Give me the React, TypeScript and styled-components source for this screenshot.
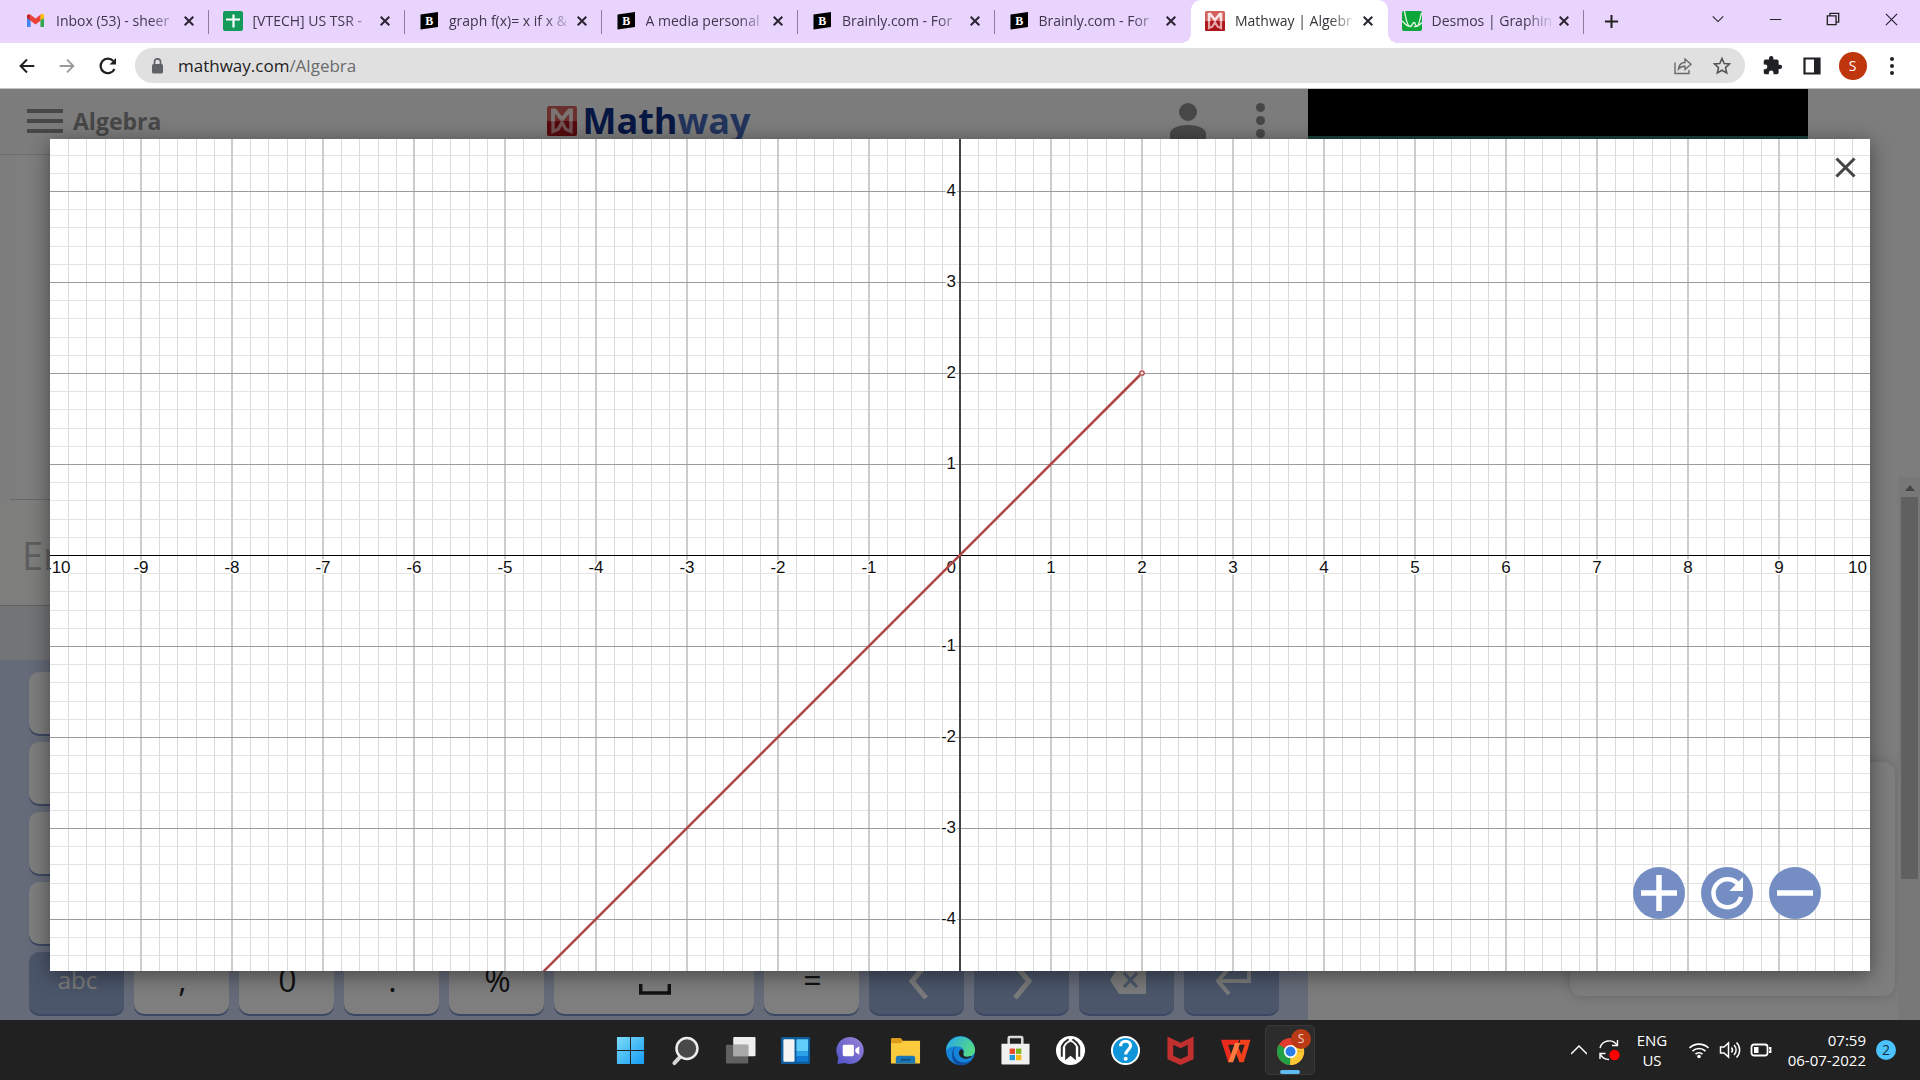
import React from "react";
import styled, { createGlobalStyle, css } from "styled-components";

const ui = `"Open Sans", "Noto Sans", sans-serif`;

const GlobalStyle = createGlobalStyle`
  * { box-sizing: border-box; }
  body { margin: 0; font-family: ${ui}; overflow: hidden; }
  button { font: inherit; color: inherit; background: none; border: 0; padding: 0; }
  svg { display: block; }
`;

const Screen = styled.div`
  height: 100vh;
  display: flex;
  flex-direction: column;
`;

/* ---------- Browser chrome ---------- */

const TabStrip = styled.div`
  height: 43px;
  flex: none;
  display: flex;
  align-items: stretch;
  background: #e8d4fd;
  padding-left: 12px;
`;

const TabList = styled.div`
  flex: 0 1 1572px;
  min-width: 0;
  display: grid;
  grid-template-columns: repeat(8, minmax(0, 1fr));
`;

const TabItem = styled.div<{ $active?: boolean; $divider?: boolean }>`
  position: relative;
  display: flex;
  align-items: center;
  gap: 10px;
  padding: 0 12px 1px 14px;
  color: ${(p) => (p.$active ? "#35353a" : "#41364c")};
  ${(p) =>
    p.$divider &&
    css`
      &::after {
        content: "";
        position: absolute;
        right: 0;
        top: 10px;
        height: 24px;
        width: 1px;
        background: #8d7f9b;
      }
    `}
  ${(p) =>
    p.$active &&
    css`
      background: #fff;
      border-radius: 10px 10px 0 0;
      &::before,
      &::after {
        content: "";
        position: absolute;
        bottom: 0;
        width: 10px;
        height: 10px;
      }
      &::before {
        left: -10px;
        background: radial-gradient(circle at 0 0, transparent 10px, #fff 10px);
      }
      &::after {
        right: -10px;
        background: radial-gradient(circle at 100% 0, transparent 10px, #fff 10px);
      }
    `}
`;

const TabTitle = styled.span`
  flex: 1;
  min-width: 0;
  overflow: hidden;
  white-space: nowrap;
  font-size: 14px;
  line-height: 20px;
  mask-image: linear-gradient(to right, #000 78%, rgba(0, 0, 0, 0.1) 100%);
`;

const IconButton = styled.button<{ $w?: number }>`
  flex: none;
  display: flex;
  align-items: center;
  justify-content: center;
  width: ${(p) => p.$w ?? 20}px;
`;

const TabIcon = styled.span`
  width: 20px;
  flex: none;
`;

const TabClose = styled(IconButton)`
  width: 16px;
  margin-left: -6px;
`;

const NewTab = styled(IconButton)`
  margin-left: 8px;
  width: 38px;
`;

const WindowControls = styled.div`
  margin-left: auto;
  display: flex;
  padding-bottom: 5px;
`;

const Toolbar = styled.div`
  height: 46px;
  flex: none;
  display: flex;
  align-items: center;
  background: #fff;
  border-bottom: 1px solid #c4c4c4;
  padding: 0 9px 0 7px;
`;

const AddressBar = styled.div`
  flex: 1;
  height: 35px;
  margin: 0 7px;
  padding: 0 3px 0 14px;
  display: flex;
  align-items: center;
  gap: 12px;
  border-radius: 18px;
  background: #e0e0e0;
`;

const Address = styled.a`
  flex: 1;
  font-size: 17px;
  line-height: 24px;
  color: #6b6b6b;
  text-decoration: none;
  b { font-weight: 400; color: #222; }
`;

const AddressActions = styled.div`
  display: flex;
`;

const Avatar = styled.span`
  width: 28px;
  height: 28px;
  border-radius: 50%;
  background: #bf360c;
  color: #fff;
  font-size: 14px;
  line-height: 28px;
  text-align: center;
`;

/* ---------- Web page behind the dialog ---------- */

const Viewport = styled.main`
  position: relative;
  flex: 1;
  min-height: 0;
  overflow: hidden;
  background: #fafafa;
`;

const Page = styled.div`
  height: 100%;
  display: flex;
`;

const Solver = styled.section`
  flex: 0 1 1308px;
  display: flex;
  flex-direction: column;
`;

const Header = styled.header`
  height: 66px;
  flex: none;
  display: grid;
  grid-template-columns: 1fr auto 1fr;
  align-items: center;
  padding: 0 43px 2px 27px;
  background: #f8f8f8;
  border-bottom: 1px solid #d8d8d8;
`;

const Subject = styled.button`
  display: flex;
  align-items: center;
  gap: 10px;
  font-size: 23px;
  line-height: 28px;
  font-weight: 700;
  color: #8f8f8f;
`;

const Logo = styled.a`
  display: flex;
  align-items: center;
  gap: 5px;
  padding-left: 6px;
  font-size: 36px;
  line-height: 40px;
  font-weight: 700;
  color: #0e2f86;
  text-decoration: none;
  em { font-style: normal; color: #4668b8; }
`;

const HeaderActions = styled.div`
  justify-self: end;
  display: flex;
  align-items: center;
  gap: 50px;
`;

const History = styled.div`
  flex: 1;
  margin-left: 10px;
  background: #fdfdfd;
  border-bottom: 1px solid #d0d0d0;
`;

const Entry = styled.input`
  height: 106px;
  flex: none;
  border: 0;
  border-bottom: 1px solid #c4c4c4;
  background: #fdfcfa;
  padding: 4px 0 0 22px;
  font-family: ${ui};
  font-size: 38px;
  &::placeholder { color: #bcbcbc; opacity: 1; }
`;

const Suggestions = styled.div`
  height: 54px;
  flex: none;
  background: #e6e8ed;
`;

const Keyboard = styled.div`
  flex: none;
  display: grid;
  grid-template-columns: repeat(12, 1fr);
  grid-auto-rows: 62px;
  gap: 8px 10px;
  padding: 12px 29px 6px;
  background: #cad6f0;
`;

const Key = styled.button<{ $blue?: boolean; $wide?: boolean }>`
  grid-column: span ${(p) => (p.$wide ? 2 : 1)};
  display: flex;
  align-items: center;
  justify-content: center;
  border-radius: 10px;
  padding: 0 0 6px 2px;
  font-size: ${(p) => (p.$blue ? 24 : 32)}px;
  line-height: 36px;
  color: ${(p) => (p.$blue ? "#fafafa" : "#222")};
  background: ${(p) => (p.$blue ? "#96acd4" : "#fdfdfd")};
  box-shadow: 0 2px 0 #788ec6;
`;

const Sidebar = styled.aside`
  flex: 1;
  display: flex;
  flex-direction: column;
  justify-content: space-between;
`;

const AdBanner = styled.div`
  height: 56px;
  width: 500px;
  background: #000;
  border-bottom: 9px solid #358370;
`;

const HelpRow = styled.div`
  display: flex;
  align-items: flex-end;
  justify-content: flex-end;
  gap: 3px;
`;

const HelpCard = styled.div`
  width: 325px;
  height: 234px;
  margin-bottom: 24px;
  border-radius: 12px;
  background: #fdfdfd;
  box-shadow: 0 0 14px rgba(0, 0, 0, 0.18);
`;

const ScrollTrack = styled.div`
  width: 22px;
  height: 543px;
  padding: 8px 2px 0 3px;
  background: #f0f0f0;
  display: flex;
  flex-direction: column;
  gap: 6px;
  align-items: center;
`;

const ScrollThumb = styled.div`
  width: 17px;
  height: 382px;
  background: #c1c1c1;
`;

/* ---------- Graph dialog ---------- */

const Overlay = styled.div`
  position: absolute;
  inset: 0;
  padding: 50px 50px 49px;
  background: rgba(0, 0, 0, 0.5);
`;

const Dialog = styled.section`
  position: relative;
  width: 100%;
  height: 100%;
  background: #fff;
  box-shadow: 0 4px 20px rgba(0, 0, 0, 0.45);
`;

const GraphSvg = styled.svg`
  width: 100%;
  height: 100%;
  text {
    font-family: "Liberation Sans", Arial, sans-serif;
    font-size: 17px;
    fill: #111;
    stroke: #fff;
    stroke-width: 3px;
    paint-order: stroke;
  }
`;

const CloseGraph = styled(IconButton)`
  position: absolute;
  top: 14px;
  right: 11px;
  width: 28px;
  height: 28px;
`;

const ZoomControls = styled.div`
  position: absolute;
  right: 49px;
  bottom: 52px;
  display: flex;
  gap: 16px;
`;

const ZoomButton = styled.button`
  width: 52px;
  height: 52px;
  border-radius: 50%;
  background: #748ec4;
`;

/* ---------- Taskbar ---------- */

const Taskbar = styled.footer`
  height: 60px;
  flex: none;
  display: grid;
  grid-template-columns: 1fr auto 1fr;
  align-items: center;
  background: #212121;
  color: #fff;
`;

const Apps = styled.nav`
  grid-column: 2;
  display: flex;
  gap: 5px;
`;

const AppButton = styled.button<{ $active?: boolean }>`
  position: relative;
  width: 50px;
  height: 50px;
  border-radius: 5px;
  display: flex;
  align-items: center;
  justify-content: center;
  ${(p) =>
    p.$active &&
    css`
      background: #2c2c2c;
      box-shadow: inset 0 0 0 1px #383838;
      &::after {
        content: "";
        position: absolute;
        bottom: 1px;
        left: 15px;
        width: 20px;
        height: 4px;
        border-radius: 2px;
        background: #5fbcf0;
      }
    `}
`;

const Badge = styled.span`
  position: absolute;
  top: 4px;
  right: 4px;
  width: 20px;
  height: 20px;
  border-radius: 50%;
  background: #b93a14;
  color: #f3d9d0;
  font-size: 12px;
  line-height: 20px;
`;

const Tray = styled.div`
  justify-self: end;
  display: flex;
  align-items: center;
  padding-right: 24px;
`;

const Stacked = styled.div<{ $right?: boolean; $w: number }>`
  width: ${(p) => p.$w}px;
  font-size: 15px;
  line-height: 20px;
  text-align: ${(p) => (p.$right ? "right" : "center")};
  white-space: nowrap;
`;

const Count = styled.span`
  width: 20px;
  height: 20px;
  margin-left: 10px;
  border-radius: 50%;
  background: #4cc2ff;
  color: #14303f;
  font-size: 14px;
  line-height: 20px;
  text-align: center;
`;

/* ---------- Icons ---------- */

const Cross = ({ size = 10, w = 2, color = "#2b2433" }) => (
  <svg width={size} height={size} viewBox="0 0 10 10">
    <path d="M.7.7l8.600 8.600M9.300.7L.7 9.300" stroke={color} strokeWidth={(w * 10) / size} fill="none" />
  </svg>
);

const Gmail = () => (
  <svg width="19" height="20" viewBox="0 0 19 20">
    <path d="M1 4.500V16h3.600V8.500z" fill="#4285f4" />
    <path d="M18 4.500V16h-3.600V8.500z" fill="#34a853" />
    <path d="M14.400 4.800V9.600L18 7V5c0-2-2-2.800-3.600-1.500z" fill="#fbbc04" />
    <path d="M1 5v2l3.600 2.700V3.800C3 2.500 1 3.300 1 5z" fill="#c5221f" />
    <path d="M4.600 3.800L9.500 7.600l4.900-3.800v5.900l-4.900 3.700-4.900-3.700z" fill="#ea4335" />
  </svg>
);

const Sheets = () => (
  <svg width="20" height="20" viewBox="0 0 20 20">
    <rect width="20" height="20" rx="2" fill="#149b5b" />
    <path d="M10.500 3.500v13M3 8.500h14" stroke="#fff" strokeWidth="2.200" />
  </svg>
);

const Brainly = () => (
  <svg width="20" height="20" viewBox="0 0 20 20">
    <path d="M1.500 3.500L19 1v15L1.500 18.500z" fill="#000" />
    <text x="10.200" y="14" fontFamily="Liberation Serif, serif" fontWeight="700" fontSize="12" fill="#fff" textAnchor="middle">B</text>
  </svg>
);

const MathwayMark = ({ size = 20 }) => (
  <svg width={size} height={size} viewBox="0 0 20 20">
    <rect width="20" height="20" rx="1.500" fill="#d4605c" />
    <path d="M0 10h20v8.500q0 1.500-1.500 1.500h-17Q0 20 0 18.500z" fill="#ad141c" />
    <path d="M4 10.500V3h1.200L10 9l4.800-6H16v7.500" stroke="#f8e6e6" strokeWidth="2.600" fill="none" />
    <path d="M4 10v7l3.500-1.500L10 11l2.500 4.500L16 17v-7" stroke="#e3a5a5" strokeWidth="2.200" fill="none" />
  </svg>
);

const Desmos = () => (
  <svg width="20" height="20" viewBox="0 0 20 20">
    <rect width="20" height="20" rx="2" fill="#0da63a" />
    <path d="M2.500 0C4 9 5.500 15.500 8 15.500s2.500-4 4-4 1.500 4 3 4S18 9 19.500 2M0 10c3 2 4 5.500 8 5.500M12 15.500c3 .5 5-1 8-4" stroke="#e9fbe9" strokeWidth="1.300" fill="none" />
  </svg>
);

const icons: Record<string, React.ReactNode> = {
  back: <path d="M20 12H5.500M12 5L5 12l7 7" stroke="#202124" strokeWidth="2.200" fill="none" />,
  forward: <path d="M4 12h14.500M12 5l7 7-7 7" stroke="#9b9b9b" strokeWidth="2" fill="none" />,
};

const NavIcon = ({ name }: { name: string }) => (
  <svg width="22" height="22" viewBox="0 0 24 24">{icons[name]}</svg>
);

const Reload = () => (
  <svg width="20" height="20" viewBox="0 0 20 20">
    <path d="M16.500 13A7.300 7.300 0 1 1 15.300 5" stroke="#202124" strokeWidth="2.200" fill="none" />
    <path d="M18 2v6.500h-6.500z" fill="#202124" />
  </svg>
);

const Lock = () => (
  <svg width="17" height="18" viewBox="0 0 17 18">
    <rect x="3" y="7" width="11" height="9.500" rx="1.500" fill="#5f6368" />
    <path d="M5.500 8V4.800a3 3 0 0 1 6 0V8" stroke="#5f6368" strokeWidth="1.700" fill="none" />
  </svg>
);

const Share = () => (
  <svg width="20" height="20" viewBox="0 0 20 20" fill="none" stroke="#6a6a6a" strokeWidth="1.400">
    <path d="M2 6.500v11h14v-3.500" />
    <path d="M5.500 13C6 8.500 9 6.500 12 6.500V3l6 5.200-6 5.300v-3.300c-3-.2-5 .8-6.500 2.800z" />
  </svg>
);

const Star = () => (
  <svg width="20" height="20" viewBox="0 0 20 20">
    <path d="M10 2.500l2.200 5 5.300.5-4 3.600 1.200 5.300L10 14.200l-4.700 2.700 1.200-5.300-4-3.600 5.300-.5z" fill="none" stroke="#555" strokeWidth="1.600" />
  </svg>
);

const Puzzle = () => (
  <svg width="21" height="21" viewBox="0 0 24 24">
    <path d="M20.500 11H19V7a2 2 0 0 0-2-2h-4V3.500a2.500 2.500 0 0 0-5 0V5H4a2 2 0 0 0-2 2v3.800h1.500a2.700 2.700 0 0 1 0 5.400H2V20a2 2 0 0 0 2 2h3.800v-1.500a2.700 2.700 0 0 1 5.400 0V22H17a2 2 0 0 0 2-2v-4h1.500a2.500 2.500 0 0 0 0-5z" fill="#202124" />
  </svg>
);

const SidePanel = () => (
  <svg width="18" height="18" viewBox="0 0 18 18">
    <path d="M1.500 1.500h15v15h-15z" fill="none" stroke="#202124" strokeWidth="2.200" />
    <path d="M11 1h6v16h-6z" fill="#202124" />
  </svg>
);

const Dots = ({ r, gap, color }: { r: number; gap: number; color: string }) => (
  <svg width={r * 2} height={gap * 2 + r * 2} fill={color}>
    {[0, 1, 2].map((i) => (
      <circle key={i} cx={r} cy={r + i * gap} r={r} />
    ))}
  </svg>
);

const Line = ({ d, size = 16, w = 1.2, color = "#222" }: { d: string; size?: number; w?: number; color?: string }) => (
  <svg width={size} height={size} viewBox="0 0 16 16" fill="none" stroke={color} strokeWidth={w}>
    <path d={d} />
  </svg>
);

/* ---------- Taskbar app icons, 32-unit grid ---------- */

const appIcons: { name: string; art: React.ReactNode }[] = [
  {
    name: "Start",
    art: (
      <g fill="url(#winBlue)">
        <path d="M2 2h13.500v13.500H2zM16.500 2H30v13.500H16.500zM2 16.500h13.500V30H2zM16.500 16.500H30V30H16.500z" />
      </g>
    ),
  },
  {
    name: "Search",
    art: (
      <g>
        <path d="M11 22L4.500 29" stroke="#d5d5d5" strokeWidth="4" strokeLinecap="round" />
        <circle cx="17.500" cy="14" r="10.800" fill="#484848" stroke="#ececec" strokeWidth="2.600" />
      </g>
    ),
  },
  {
    name: "Task view",
    art: (
      <g>
        <rect x="8.500" y="2" width="23" height="20" rx="1" fill="#eee" />
        <rect x="1" y="10" width="23" height="19.500" rx="1" fill="#6b6b6b" opacity=".85" />
        <rect x="8.500" y="10" width="15.500" height="12" fill="#a9a9a9" />
      </g>
    ),
  },
  {
    name: "Widgets",
    art: (
      <g>
        <rect x="1" y="2" width="30" height="28" rx="1.500" fill="#0f5c9c" />
        <rect x="3.500" y="4.500" width="11.500" height="23" rx="1" fill="#f4f4f4" />
        <rect x="17" y="4.500" width="12" height="12.500" rx="1" fill="#62cdf8" />
        <path d="M17 17h12v5H17z" fill="#2ba3ea" />
        <path d="M17 22h12v5.500H17z" fill="#0f7bd6" />
      </g>
    ),
  },
  {
    name: "Chat",
    art: (
      <g>
        <path d="M16 2a14 14 0 1 1-6 26.800L2.500 30l.8-7A14 14 0 0 1 16 2z" fill="url(#chatViolet)" />
        <rect x="8" y="10" width="11.500" height="12" rx="1.500" fill="#fff" />
        <path d="M21 14.500l4-3v9l-4-3z" fill="#fff" />
      </g>
    ),
  },
  {
    name: "File Explorer",
    art: (
      <g>
        <path d="M1 4.500Q1 3 2.500 3H11l3 3.500V12H1z" fill="#d99c1c" />
        <path d="M1 8.500h10L14 6h17v23.500H1z" fill="#fccb3d" />
        <path d="M6 29.500V24q0-2.500 2.500-2.500h15Q26 21.500 26 24v5.500z" fill="#1a78b8" />
        <path d="M11 25.500h10" stroke="#0e5187" strokeWidth="2" />
      </g>
    ),
  },
  {
    name: "Edge",
    art: (
      <g>
        <circle cx="16" cy="16" r="15" fill="#1583d8" />
        <path d="M1.500 13A15 15 0 0 1 31 15.500c0 5-4 7-8 7-3 0-4.500-1.500-4-3 2-5-2-8-7-8S3 13 1.500 16z" fill="url(#edgeGreen)" />
        <path d="M11 11.500c-3 4-3 10 1 14s10 3.500 16 .5A15 15 0 0 1 14 31C5 28 6 15 11 11.500z" fill="#0d4f9e" />
        <path d="M19 19c-.6 2 1 3.500 4 3.500 2 0 4-.5 5.500-1.500-2 4-10 5-13 1-2-3-1-6.500 1.500-7.500 2 1 2.500 3 2 4.500z" fill="#212121" />
      </g>
    ),
  },
  {
    name: "Microsoft Store",
    art: (
      <g>
        <path d="M9 10V3q0-1 1-1h12q1 0 1 1v7" fill="none" stroke="#dadada" strokeWidth="2.600" />
        <path d="M1.500 9h29v20.500q0 1-1 1h-27q-1 0-1-1z" fill="#f0f0f0" />
        <path d="M10 14h5.500v5.500H10z" fill="#e4492b" />
        <path d="M16.500 14H22v5.500h-5.500z" fill="#7eb51c" />
        <path d="M10 20.500h5.500V26H10z" fill="#2398d8" />
        <path d="M16.500 20.500H22V26h-5.500z" fill="#f5b90f" />
      </g>
    ),
  },
  {
    name: "Assistant",
    art: (
      <g>
        <circle cx="16" cy="16" r="15" fill="#fff" />
        <path d="M10.500 26V11.500L13 8.500l3-1.500 3 1.500 2.500 3V26L16 21.500z" fill="#2a2a2a" />
        <path d="M7 22.500V12l2.500-4L14 4.500M25 22.500V12l-2.500-4L18 4.500" fill="none" stroke="#2a2a2a" strokeWidth="2" />
      </g>
    ),
  },
  {
    name: "Get Help",
    art: (
      <g>
        <circle cx="16" cy="16" r="14" fill="#0f95d8" stroke="#fff" strokeWidth="2" />
        <path d="M11 11.500c0-3 2-5 5-5s5.200 1.800 5.200 4.700c0 4-5 4.300-5 8.800" fill="none" stroke="#fff" strokeWidth="3.200" />
        <circle cx="16.200" cy="24.500" r="2.100" fill="#fff" />
      </g>
    ),
  },
  {
    name: "McAfee",
    art: <path d="M2.500 1.500L16 8l13.500-6.500V25L16 31 2.500 25zM8.500 10v11.500l7.500 3.300 7.500-3.300V10L16 13.800z" fill="#c1302f" fillRule="evenodd" />,
  },
  {
    name: "WPS Office",
    art: (
      <g>
        <path d="M1 5h19l-2 5H8.500l3 10L10 28H8.500z" fill="#ea2a1c" />
        <path d="M21 5h10.500L24.500 28H20L15.500 16 18 10l4 10 3.500-10H20z" fill="#f0401c" />
        <path d="M15.500 8H21L13.500 28H8.500z" fill="#ff7a3c" />
      </g>
    ),
  },
  {
    name: "Chrome",
    art: (
      <g>
        <circle cx="16" cy="17" r="14" fill="#e23b2e" />
        <path d="M16 17L4 9.800A14 14 0 0 0 15.500 31L22 20.500z" fill="#23a046" />
        <path d="M16 17h12.500l1.300-3A14 14 0 0 1 15.500 31z" fill="#fcc934" />
        <path d="M16 10.500h12.500A14 14 0 0 1 30 17H16z" fill="#fcc934" />
        <circle cx="16" cy="17" r="6.800" fill="#fff" />
        <circle cx="16" cy="17" r="5.200" fill="#2a7de8" />
      </g>
    ),
  },
];

const HiddenSvg = styled.svg`
  position: absolute;
`;

const Defs = () => (
  <HiddenSvg width="0" height="0" aria-hidden="true">
    <defs>
      <linearGradient id="winBlue" x1="0" y1="0" x2="1" y2="1">
        <stop offset="0" stopColor="#7ddcfb" />
        <stop offset="1" stopColor="#159cf2" />
      </linearGradient>
      <linearGradient id="chatViolet" x1="1" y1="0" x2="0" y2="1">
        <stop offset="0" stopColor="#9a84d8" />
        <stop offset="1" stopColor="#4f52c8" />
      </linearGradient>
      <linearGradient id="edgeGreen" x1="0" y1="0" x2="1" y2=".4">
        <stop offset="0" stopColor="#27a5ec" />
        <stop offset="1" stopColor="#54d98a" />
      </linearGradient>
    </defs>
  </HiddenSvg>
);

/* ---------- Graph ---------- */

const UNIT = 91;
const range = (from: number, to: number) => Array.from({ length: to - from + 1 }, (_, i) => from + i);

const Graph = () => (
  <GraphSvg viewBox="-910 -416 1820 832" preserveAspectRatio="xMidYMid slice" role="img" aria-label="Graph">
    <g shapeRendering="crispEdges">
      {range(-50, 50).filter((i) => i % 5).map((i) => (
        <rect key={"v" + i} x={Math.round((i * UNIT) / 5)} y="-416" width="1" height="832" fill="#dadada" />
      ))}
      {range(-23, 23).filter((i) => i % 5).map((i) => (
        <rect key={"h" + i} x="-910" y={Math.round((i * UNIT) / 5)} width="1820" height="1" fill="#e4e4e4" />
      ))}
      {range(-9, 9).map((i) => (
        <rect key={"V" + i} x={i * UNIT - 1} y="-416" width="2" height="832" fill="#cccccc" />
      ))}
      {range(-4, 4).map((i) => (
        <rect key={"H" + i} x="-910" y={i * UNIT} width="1820" height="1" fill="#9c9c9c" />
      ))}
      <rect x="-910" y="0" width="1820" height="1" fill="#000" />
      <rect x="-1" y="-416" width="2" height="832" fill="#444" />
    </g>
    {range(-9, 9).filter((i) => i).map((i) => (
      <text key={"x" + i} x={i * UNIT} y="18" textAnchor="middle">{i}</text>
    ))}
    <text x="-914" y="18">-10</text>
    <text x="907" y="18" textAnchor="end">10</text>
    <text x="-4" y="18" textAnchor="end">0</text>
    {range(-4, 4).filter((i) => i).map((i) => (
      <text key={"y" + i} x="-4" y={-i * UNIT + 5} textAnchor="end">{i}</text>
    ))}
    <path d={`M-420 420L${2 * UNIT - 2} ${-2 * UNIT + 2}`} stroke="#b04545" strokeWidth="2.500" />
    <circle cx={2 * UNIT} cy={-2 * UNIT} r="2.200" fill="#fbe3e3" stroke="#b04545" strokeWidth="1.300" />
  </GraphSvg>
);

/* ---------- App ---------- */

const tabs = [
  { title: "Inbox (53) - sheer", icon: <Gmail />, divider: true },
  { title: "[VTECH] US TSR -", icon: <Sheets />, divider: true },
  { title: "graph f(x)= x if x &", icon: <Brainly />, divider: true },
  { title: "A media personal", icon: <Brainly />, divider: true },
  { title: "Brainly.com - For", icon: <Brainly />, divider: true },
  { title: "Brainly.com - For", icon: <Brainly /> },
  { title: "Mathway | Algebr", icon: <MathwayMark />, active: true },
  { title: "Desmos | Graphin", icon: <Desmos />, divider: true },
];

export default function App() {
  return (
    <Screen>
      <GlobalStyle />
      <Defs />
      <TabStrip>
        <TabList>
          {tabs.map((t, i) => (
            <TabItem key={i} $active={t.active} $divider={t.divider}>
              <TabIcon>{t.icon}</TabIcon>
              <TabTitle>{t.title}</TabTitle>
              <TabClose aria-label="Close tab"><Cross /></TabClose>
            </TabItem>
          ))}
        </TabList>
        <NewTab aria-label="New tab"><Line d="M8 1v14M1 8h14" w={2.2} size={15} /></NewTab>
        <WindowControls>
          <IconButton $w={58} aria-label="Search tabs"><Line d="M2 5l6 6 6-6" size={14} /></IconButton>
          <IconButton $w={57} aria-label="Minimize"><Line d="M1 8h14" size={13} /></IconButton>
          <IconButton $w={58} aria-label="Restore"><Line d="M1.500 4.500h10v10h-10zM4.500 4V1.500h10v10H12" size={14} w={1.500} /></IconButton>
          <IconButton $w={58} aria-label="Close"><Cross size={13} w={1.2} /></IconButton>
        </WindowControls>
      </TabStrip>
      <Toolbar>
        <IconButton $w={40} aria-label="Back"><NavIcon name="back" /></IconButton>
        <IconButton $w={40} aria-label="Forward"><NavIcon name="forward" /></IconButton>
        <IconButton $w={41} aria-label="Reload"><Reload /></IconButton>
        <AddressBar>
          <Lock />
          <Address href="#"><b>mathway.com</b>/Algebra</Address>
          <AddressActions>
            <IconButton $w={39} aria-label="Share"><Share /></IconButton>
            <IconButton $w={40} aria-label="Bookmark"><Star /></IconButton>
          </AddressActions>
        </AddressBar>
        <IconButton $w={40} aria-label="Extensions"><Puzzle /></IconButton>
        <IconButton $w={40} aria-label="Side panel"><SidePanel /></IconButton>
        <IconButton $w={41} aria-label="Profile"><Avatar>S</Avatar></IconButton>
        <IconButton $w={38} aria-label="Menu"><Dots r={2} gap={7} color="#202124" /></IconButton>
      </Toolbar>

      <Viewport>
        <Page>
          <Solver>
            <Header>
              <Subject>
                <svg width="36" height="24" fill="#8f8f8f">
                  <path d="M0 0h36v4H0zM0 10h36v4H0zM0 20h36v4H0z" />
                </svg>
                Algebra
              </Subject>
              <Logo href="#">
                <MathwayMark size={30} />
                <span>Math<em>way</em></span>
              </Logo>
              <HeaderActions>
                <svg width="36" height="36" fill="#8f8f8f">
                  <circle cx="18" cy="9" r="9" />
                  <path d="M0 36v-5c0-6 9-9 18-9s18 3 18 9v5z" />
                </svg>
                <Dots r={4.5} gap={13} color="#8f8f8f" />
              </HeaderActions>
            </Header>
            <History />
            <Entry aria-label="Problem" placeholder="Enter a problem..." />
            <Suggestions />
            <Keyboard>
              {range(0, 47).map((i) => (
                <Key key={i} aria-label={`Key ${i + 1}`} />
              ))}
              <Key $blue>abc</Key>
              <Key>,</Key>
              <Key>0</Key>
              <Key>.</Key>
              <Key>%</Key>
              <Key $wide aria-label="Space">
                <svg width="32" height="32" fill="none" stroke="#222" strokeWidth="3.500"><path d="M1.700 20v9h28.600v-9" /></svg>
              </Key>
              <Key>=</Key>
              <Key $blue aria-label="Left">
                <svg width="22" height="38" fill="none" stroke="#f6f6f6" strokeWidth="5"><path d="M19 4L5 20l14 17" /></svg>
              </Key>
              <Key $blue aria-label="Right">
                <svg width="22" height="38" fill="none" stroke="#f6f6f6" strokeWidth="5"><path d="M3 4l14 16L3 37" /></svg>
              </Key>
              <Key $blue aria-label="Backspace">
                <svg width="36" height="28"><path d="M0 14L9 0h27v28H9z" fill="#f6f6f6" /><path d="M14 7l13 14M27 7L14 21" stroke="#96acd4" strokeWidth="3" /></svg>
              </Key>
              <Key $blue aria-label="Enter">
                <svg width="36" height="34" fill="none" stroke="#f6f6f6" strokeWidth="4"><path d="M34 0v18H3M14 5L3 18l11 13" /></svg>
              </Key>
            </Keyboard>
          </Solver>
          <Sidebar>
            <AdBanner />
            <HelpRow>
              <HelpCard />
              <ScrollTrack>
                <svg width="10" height="6"><path d="M0 6l5-6 5 6z" fill="#8a8a8a" /></svg>
                <ScrollThumb />
              </ScrollTrack>
            </HelpRow>
          </Sidebar>
        </Page>
        <Overlay>
          <Dialog>
            <Graph />
            <CloseGraph aria-label="Close graph"><Cross size={21} w={3} color="#444" /></CloseGraph>
            <ZoomControls>
              <ZoomButton aria-label="Zoom in">
                <svg width="52" height="52"><path d="M26 8v36M8 26h36" stroke="#fff" strokeWidth="5.500" /></svg>
              </ZoomButton>
              <ZoomButton aria-label="Reset">
                <svg width="52" height="52">
                  <path d="M40 30A14 14 0 1 1 37 17" fill="none" stroke="#fff" strokeWidth="4.500" />
                  <path d="M42 10v14H28.500z" fill="#fff" />
                </svg>
              </ZoomButton>
              <ZoomButton aria-label="Zoom out">
                <svg width="52" height="52"><path d="M8 26h36" stroke="#fff" strokeWidth="5.500" /></svg>
              </ZoomButton>
            </ZoomControls>
          </Dialog>
        </Overlay>
      </Viewport>

      <Taskbar>
        <Apps>
          {appIcons.map((a) => {
            const active = a.name === "Chrome";
            return (
              <AppButton key={a.name} aria-label={a.name} $active={active}>
                <svg width="31" height="31" viewBox="0 0 32 32">{a.art}</svg>
                {active && <Badge>S</Badge>}
              </AppButton>
            );
          })}
        </Apps>
        <Tray>
          <IconButton $w={30} aria-label="Hidden icons"><Line d="M0 12l8-8 8 8" color="#fff" w={1.500} /></IconButton>
          <IconButton $w={30} aria-label="Sync">
            <svg width="22" height="22" fill="none" stroke="#fff" strokeWidth="1.400">
              <path d="M2 9a9.500 9.500 0 0 1 17-3M19.500 1v5.500H14M11 20.500C7 20.500 3 18 2 14.500M2 20v-5.500h5.500" />
              <circle cx="16.500" cy="16" r="5.200" fill="#f00" stroke="none" />
            </svg>
          </IconButton>
          <Stacked $w={56}>ENG<br />US</Stacked>
          <IconButton $w={38} aria-label="Wi-Fi">
            <svg width="22" height="18" fill="none" stroke="#fff" strokeWidth="1.700">
              <path d="M1.500 7a13.500 13.500 0 0 1 19 0M4.500 10.200a9.200 9.200 0 0 1 13 0M7.500 13.200a5 5 0 0 1 7 0" />
              <circle cx="11" cy="15.500" r="1.800" fill="#fff" stroke="none" />
            </svg>
          </IconButton>
          <IconButton $w={24} aria-label="Volume">
            <svg width="22" height="18" fill="none" stroke="#fff" strokeWidth="1.500">
              <path d="M1.500 6v6H5l4.500 4V2L5 6zM12.500 6.500a4 4 0 0 1 0 5M15 4a7 7 0 0 1 0 10M17.500 1.500a10.500 10.500 0 0 1 0 15" />
            </svg>
          </IconButton>
          <IconButton $w={38} aria-label="Battery">
            <svg width="22" height="14" fill="none" stroke="#fff" strokeWidth="1.800">
              <rect x="1.500" y="1.500" width="16" height="11" rx="2.500" />
              <path d="M4 4h4.500v6H4z" fill="#fff" stroke="none" />
              <path d="M19 5h1.500v4H19" />
            </svg>
          </IconButton>
          <Stacked $w={86} $right>07:59<br />06-07-2022</Stacked>
          <Count>2</Count>
        </Tray>
      </Taskbar>
    </Screen>
  );
}
